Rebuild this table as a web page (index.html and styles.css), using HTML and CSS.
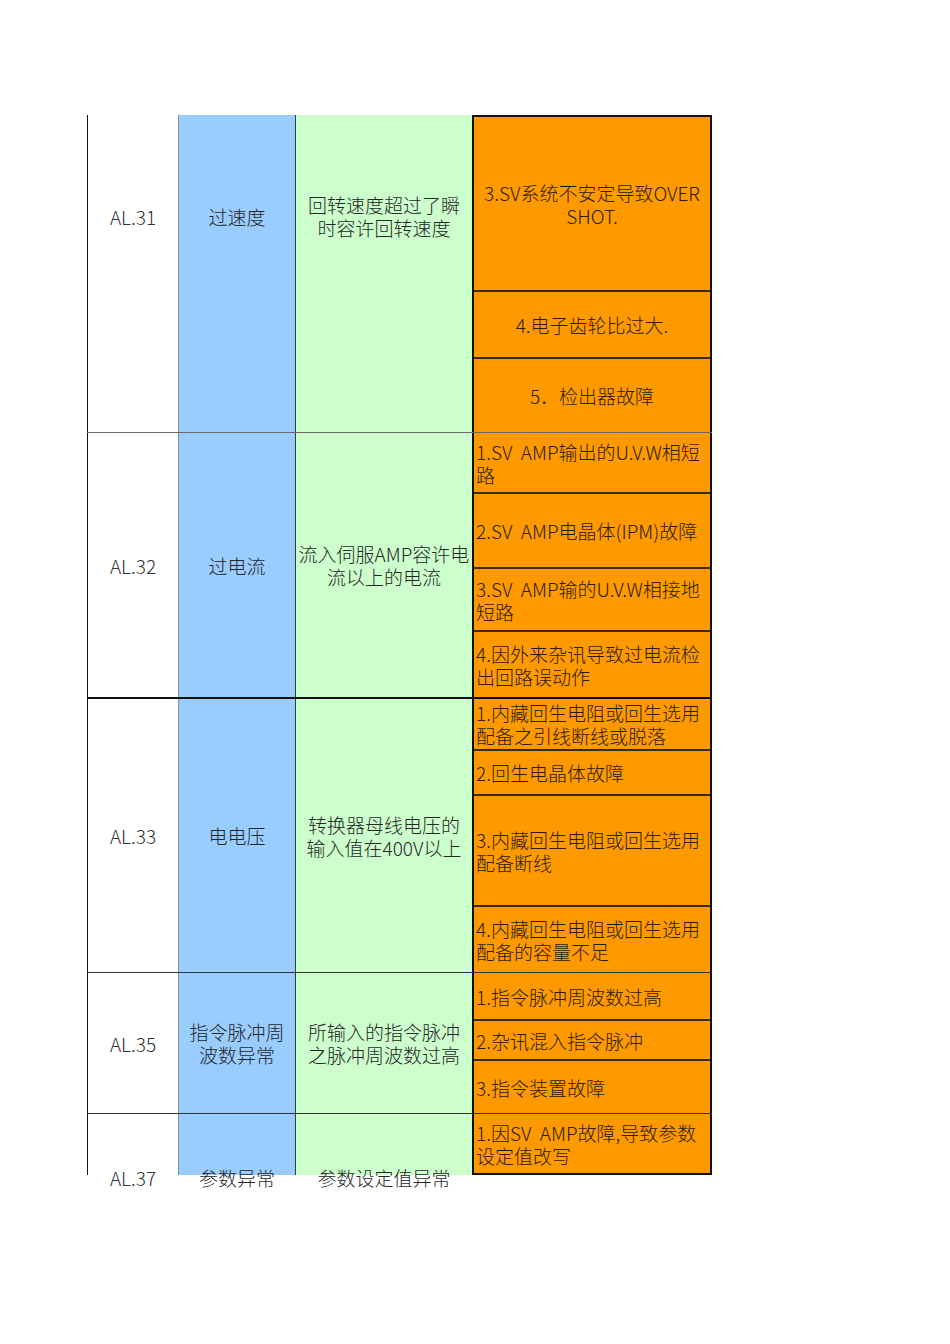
FILE: index.html
```html
<!DOCTYPE html>
<html lang="zh">
<head>
<meta charset="utf-8">
<title>Alarm table</title>
<link rel="stylesheet" href="styles.css">
</head>
<body>
<div class="sheet">
  <div class="group g1">
    <div class="cell code">AL.31</div>
    <div class="cell name">过速度</div>
    <div class="cell desc">回转速度超过了瞬<br>时容许回转速度</div>
    <div class="causes">
      <div class="cause center h173">3.SV系统不安定导致OVER<br>SHOT.</div>
      <div class="cause center h67">4.电子齿轮比过大.</div>
      <div class="cause center h75">5．检出器故障</div>
    </div>
  </div>
  <div class="group g2">
    <div class="cell code">AL.32</div>
    <div class="cell name">过电流</div>
    <div class="cell desc">流入伺服AMP容许电<br>流以上的电流</div>
    <div class="causes">
      <div class="cause h59">1.SV&nbsp; AMP输出的U.V.W相短<br>路</div>
      <div class="cause h75">2.SV&nbsp; AMP电晶体(IPM)故障</div>
      <div class="cause h63">3.SV&nbsp; AMP输的U.V.W相接地<br>短路</div>
      <div class="cause h67">4.因外来杂讯导致过电流检<br>出回路误动作</div>
    </div>
  </div>
  <div class="group g3">
    <div class="cell code">AL.33</div>
    <div class="cell name">电电压</div>
    <div class="cell desc">转换器母线电压的<br>输入值在400V以上</div>
    <div class="causes">
      <div class="cause h50">1.内藏回生电阻或回生选用<br>配备之引线断线或脱落</div>
      <div class="cause h45">2.回生电晶体故障</div>
      <div class="cause h111">3.内藏回生电阻或回生选用<br>配备断线</div>
      <div class="cause h67">4.内藏回生电阻或回生选用<br>配备的容量不足</div>
    </div>
  </div>
  <div class="group g4">
    <div class="cell code">AL.35</div>
    <div class="cell name">指令脉冲周<br>波数异常</div>
    <div class="cell desc">所输入的指令脉冲<br>之脉冲周波数过高</div>
    <div class="causes">
      <div class="cause h46">1.指令脉冲周波数过高</div>
      <div class="cause h40">2.杂讯混入指令脉冲</div>
      <div class="cause h54">3.指令装置故障</div>
    </div>
  </div>
  <div class="group g5">
    <div class="cell code low">AL.37</div>
    <div class="cell name low">参数异常</div>
    <div class="cell desc low">参数设定值异常</div>
    <div class="causes last">
      <div class="cause h59">1.因SV&nbsp; AMP故障,导致参数<br>设定值改写</div>
    </div>
  </div>
</div>
</body>
</html>
```

FILE: styles.css
```css
html, body {
  margin: 0;
  padding: 0;
  background: #ffffff;
}

body {
  font-family: "Noto Sans CJK SC", "Noto Sans", sans-serif;
  font-size: 19px;
  line-height: 23px;
  color: #262626;
}

.sheet {
  padding: 115px 0 120px 87px;
  width: 625px;
}

.group {
  display: grid;
  grid-template-columns: 92px 117px 176px 240px;
  grid-template-rows: 100%;
  box-sizing: border-box;
}

.g1 { height: 317px; }
.g2 { height: 265px; border-top: 1px solid #6a6a6a; }
.g3 { height: 275px; border-top: 2px solid #111; }
.g4 { height: 141px; border-top: 1px solid #333; }
.g5 { height: 62px; border-top: 1px solid #333; }

.cell {
  display: flex;
  align-items: center;
  justify-content: center;
  text-align: center;
  box-sizing: border-box;
  font-weight: 300;
  min-height: 0;
  white-space: nowrap;
}

.g1 .cell {
  padding-bottom: 115px;
}

.code {
  background: #ffffff;
  border-left: 1px solid #111;
  border-right: 1px solid #8a8a8a;
  color: #333;
}

.name {
  background: #99ccff;
  border-right: 1px solid #2f3f3f;
}

.desc {
  background: #ccffcc;
}

.low {
  align-items: flex-start;
  padding-top: 52px;
  overflow: visible;
}

.causes {
  display: flex;
  flex-direction: column;
  border-left: 2px solid #111;
  border-right: 2px solid #111;
  box-sizing: border-box;
  background: #ff9900;
  min-height: 0;
}

.g1 .causes {
  border-top: 2px solid #111;
}

.causes.last {
  border-bottom: 2px solid #111;
}

.cause {
  display: flex;
  align-items: center;
  flex-shrink: 0;
  box-sizing: border-box;
  padding-left: 2px;
  background: #ff9900;
  color: #2b1d00;
  font-weight: 300;
  white-space: nowrap;
  border-top: 2px solid #3a2a10;
}

.cause:first-child {
  border-top: none;
}

.center {
  justify-content: center;
  text-align: center;
  padding-left: 0;
}

.h173 { height: 173px; }
.h67 { height: 67px; }
.h75 { height: 75px; }
.h59 { height: 59px; }
.h63 { height: 63px; }
.h50 { height: 50px; }
.h45 { height: 45px; }
.h111 { height: 111px; }
.h46 { height: 46px; }
.h40 { height: 40px; }
.h54 { height: 54px; }
```
